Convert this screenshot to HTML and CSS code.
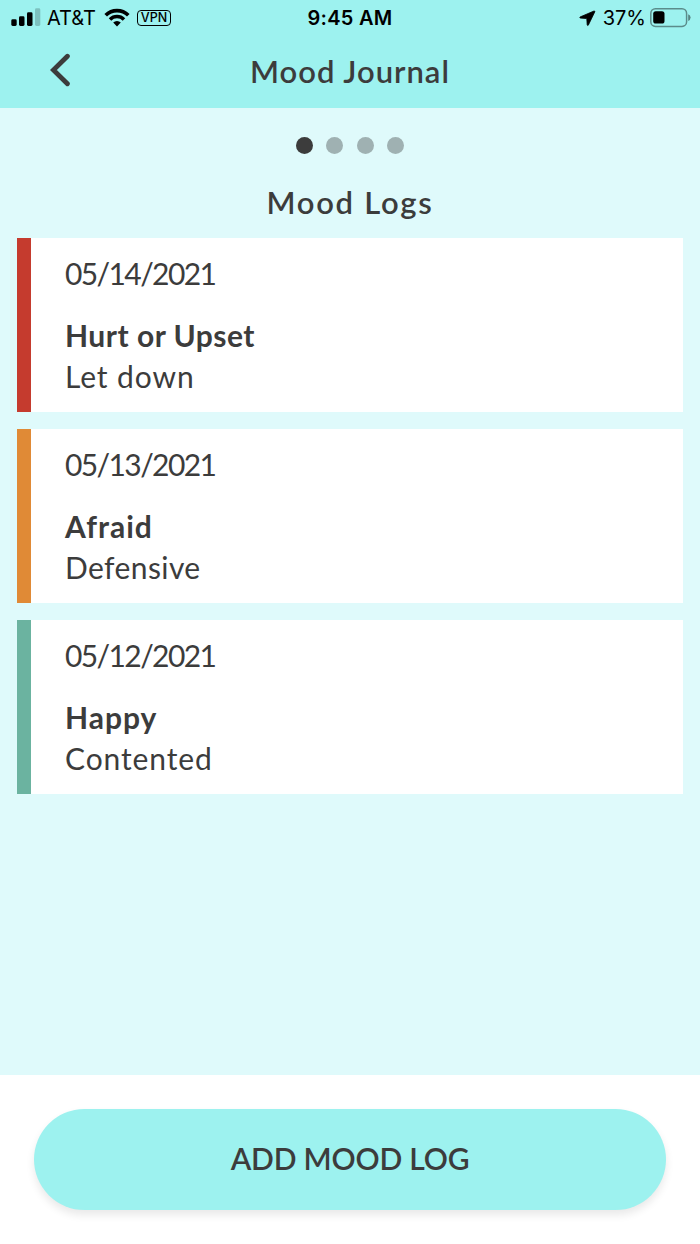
FILE: index.html
```html
<!DOCTYPE html>
<html lang="en">
  <head>
    <meta charset="utf-8">
    <title>Mood Journal</title>
    <link rel="stylesheet" href="styles.css">
  </head>
  <body>

    <div class="header">
      <div class="status">
        <div class="status-left">
          <svg class="signal" width="30" height="20" viewBox="0 0 30 20">
            <rect x="0.3" y="11.3" width="5.4" height="6.7" rx="1.4"/>
            <rect x="8" y="8.3" width="5.5" height="9.7" rx="1.4"/>
            <rect x="16" y="4.3" width="5.5" height="13.7" rx="1.4"/>
            <rect x="24" y="0.3" width="5.3" height="17.7" rx="1.4" opacity="0.2"/>
          </svg>
          <span class="carrier">AT&amp;T</span>
          <svg class="wifi" width="26" height="20" viewBox="0 0 26 20">
            <path d="M1.7 7.2 A16 16 0 0 1 24.3 7.2" fill="none" stroke="#000" stroke-width="3.7"/>
            <path d="M6 11.5 A9.9 9.9 0 0 1 20 11.5" fill="none" stroke="#000" stroke-width="3.5"/>
            <path d="M9.2 14.6 A5.4 5.4 0 0 1 16.8 14.6 L13 18.5 Z"/>
          </svg>
          <span class="vpn">VPN</span>
        </div>
        <span class="time">9:45 AM</span>
        <div class="status-right">
          <svg class="location" width="17" height="17" viewBox="0 0 17 17">
            <path d="M15 1 L1 7 Q0.4 7.8 1.5 8.1 L7.8 8.6 L8.2 15 Q8.6 16 9.4 15 L15.8 1.8 Q16 0.8 15 1 Z" stroke="#000" stroke-width="0.8"/>
          </svg>
          <span class="percent">37%</span>
          <svg class="battery" width="41" height="20" viewBox="0 0 41 20">
            <rect x="0.8" y="0.8" width="35.8" height="17.6" rx="4.6" fill="none" stroke="#000" stroke-width="1.5" opacity="0.42"/>
            <path d="M38.2 6.3 Q40.6 7.2 40.6 9.6 Q40.6 12 38.2 12.9 Z" opacity="0.45"/>
            <rect x="3.2" y="3.2" width="11.3" height="12.4" rx="2.6"/>
          </svg>
        </div>
      </div>
      <div class="nav">
        <svg class="back" width="20" height="34" viewBox="0 0 20 34">
          <path d="M17.4 3.2 L3.4 17 L17.4 30.8" fill="none" stroke="#3c3c3c" stroke-width="4.8" stroke-linecap="round"/>
        </svg>
        <h1>Mood Journal</h1>
      </div>
    </div>

    <div class="content">
      <div class="dots">
        <span class="dot active"></span>
        <span class="dot"></span>
        <span class="dot"></span>
        <span class="dot"></span>
      </div>
      <h2>Mood Logs</h2>

      <div class="log red">
        <p class="date">05/14/2021</p>
        <p class="mood">Hurt or Upset</p>
        <p class="detail">Let down</p>
      </div>
      <div class="log orange">
        <p class="date">05/13/2021</p>
        <p class="mood">Afraid</p>
        <p class="detail">Defensive</p>
      </div>
      <div class="log green">
        <p class="date">05/12/2021</p>
        <p class="mood">Happy</p>
        <p class="detail">Contented</p>
      </div>
    </div>

    <div class="footer">
      <button>ADD MOOD LOG</button>
    </div>

  </body>
</html>
```
FILE: styles.css
```css
* {
  box-sizing: border-box;
}

body {
  margin: 0;
  height: 1244px;
  display: flex;
  flex-direction: column;
  background: #fff;
  color: #3c3c3c;
  font-family: Lato, "Liberation Sans", sans-serif;
}

h1, h2, p {
  margin: 0;
}

/* Header with the phone status bar */
.header {
  height: 108px;
  background: #9df2ef;
}

.status {
  display: grid;
  grid-template-columns: 1fr auto 1fr;
  align-items: center;
  height: 36px;
  padding: 0 9px 0 11px;
  color: #000;
  font-family: Inter, sans-serif;
  font-size: 20px;
}

.status-left, .status-right {
  display: flex;
  align-items: center;
}

.status-right {
  justify-content: flex-end;
}

.carrier {
  margin-left: 6px;
}

.wifi {
  margin-left: 8px;
}

.vpn {
  margin-left: 7px;
  width: 34px;
  height: 16px;
  border: 1.5px solid #000;
  border-radius: 4px;
  font-size: 12.5px;
  font-weight: 500;
  line-height: 14px;
  text-align: center;
}

.time {
  margin-left: -2px;
  font-weight: 600;
  letter-spacing: 0.3px;
}

.percent {
  margin: 0 4px 0 7px;
}

.nav {
  display: grid;
  grid-template-columns: 50px 1fr 50px;
  align-items: center;
  height: 70px;
}

.back {
  justify-self: end;
  margin-right: -20px;
  margin-top: -2px;
}

h1 {
  font-size: 31px;
  font-weight: 600;
  letter-spacing: 1px;
  text-align: center;
}

/* Log list */
.content {
  flex: 1;
  padding: 29px 17px 0;
  background: #dffafb;
}

.dots {
  display: flex;
  justify-content: center;
  gap: 13.4px;
}

.dot {
  width: 17px;
  height: 17px;
  border-radius: 50%;
  background: #9fb1b2;
}

.dot.active {
  background: #3c3c3c;
}

h2 {
  margin-top: 28px;
  margin-bottom: 16px;
  font-size: 31px;
  font-weight: 600;
  line-height: 40px;
  letter-spacing: 1.7px;
  text-align: center;
}

.log {
  height: 174px;
  margin-bottom: 17px;
  padding: 15px 34px 0;
  border-left: 14px solid;
  background: #fff;
  font-size: 30px;
  line-height: 41px;
}

.log p {
  color: #3c3c3c;
}

.red {
  border-color: #c53b2e;
}

.orange {
  border-color: #e08a36;
}

.green {
  border-color: #6bb3a0;
}

.date {
  margin-bottom: 21px;
  letter-spacing: -1.6px;
}

.mood {
  font-weight: 700;
  letter-spacing: 1px;
}

.red .mood {
  letter-spacing: 0.5px;
}

.detail {
  letter-spacing: 0.9px;
}

.orange .detail {
  letter-spacing: 0.4px;
}

/* Bottom bar */
.footer {
  height: 169px;
  padding: 34px 34px 0;
  background: #fff;
}

button {
  display: block;
  width: 100%;
  height: 101px;
  padding: 0 0 4px;
  border: 0;
  border-radius: 51px;
  background: #9df2ef;
  box-shadow: 0 5px 8px rgba(0, 0, 0, 0.09);
  color: #3c3c3c;
  font-family: inherit;
  font-size: 30px;
  font-weight: 600;
  letter-spacing: -0.2px;
}
```
